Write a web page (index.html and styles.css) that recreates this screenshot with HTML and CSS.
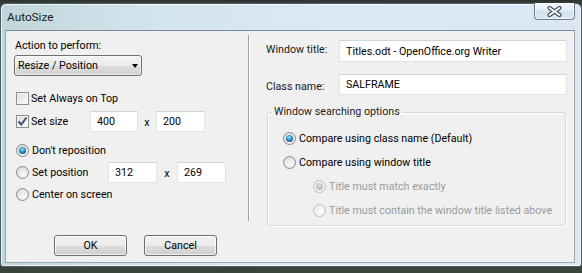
FILE: index.html
```html
<!DOCTYPE html>
<html>
<head>
<meta charset="utf-8">
<title>AutoSize</title>
<link rel="stylesheet" href="styles.css">
</head>
<body>
<div class="window">
  <div class="titlebar">
    <span class="title">AutoSize</span>
    <div class="close">
      <svg width="15" height="11" viewBox="0 0 15 11">
        <path d="M2.5 2 L12.5 9 M12.5 2 L2.5 9" stroke="#3f4854" stroke-width="4" stroke-linecap="round" fill="none"/>
        <path d="M2.5 2 L12.5 9 M12.5 2 L2.5 9" stroke="#ffffff" stroke-width="2" stroke-linecap="round" fill="none"/>
      </svg>
    </div>
  </div>
  <div class="client">
    <div class="main">
      <div class="left">
        <div class="label">Action to perform:</div>
        <div class="select"><span>Resize / Position</span><span class="arrow"></span></div>
        <div class="row row-top"><span class="check"></span><span>Set Always on Top</span></div>
        <div class="row row-size">
          <span class="opt opt-size"><span class="check"><svg width="11" height="11" viewBox="0 0 11 11"><path d="M1.5 5.5 L4.3 8.5 L9.5 1.5" stroke="#3b4f7a" stroke-width="2" fill="none"/></svg></span><span>Set size</span></span>
          <span class="field fw48">400</span><span class="times">x</span><span class="field fw49">200</span>
        </div>
        <div class="radios">
          <div class="row"><span class="radio on"></span><span>Don't reposition</span></div>
          <div class="row">
            <span class="opt opt-pos"><span class="radio"></span><span>Set position</span></span>
            <span class="field fw49">312</span><span class="times times-pos">x</span><span class="field fw49">269</span>
          </div>
          <div class="row"><span class="radio"></span><span>Center on screen</span></div>
        </div>
      </div>
      <div class="sep"></div>
      <div class="right">
        <div class="frow"><span class="flabel">Window title:</span><span class="field fwide">Titles.odt - OpenOffice.org Writer</span></div>
        <div class="frow frow-2"><span class="flabel flabel-2">Class name:</span><span class="field fwide">SALFRAME</span></div>
        <fieldset class="group">
          <legend>Window searching options</legend>
          <div class="group-body">
            <div class="grow"><span class="radio on"></span><span>Compare using class name (Default)</span></div>
            <div class="grow"><span class="radio"></span><span>Compare using window title</span></div>
            <div class="grow sub disabled"><span class="radio on"></span><span>Title must match exactly</span></div>
            <div class="grow sub disabled"><span class="radio"></span><span>Title must contain the window title listed above</span></div>
          </div>
        </fieldset>
      </div>
    </div>
    <div class="buttons">
      <div class="btn">OK</div>
      <div class="btn">Cancel</div>
    </div>
  </div>
</div>
</body>
</html>
```
FILE: styles.css
```css
* { box-sizing: border-box; }
html, body { margin: 0; padding: 0; }
body {
  width: 582px;
  height: 273px;
  overflow: hidden;
  background: linear-gradient(180deg, #2d322f 0px, #3a3f3b 3px, #39443a 100%);
  font-family: Roboto, "Liberation Sans", sans-serif;
  font-size: 10.7px;
  color: #000;
}
.window {
  margin-top: 3px;
  width: 582px;
  height: 264px;
  display: flex;
  flex-direction: column;
  border: 1px solid #4e5c69;
  border-radius: 6px 6px 3px 3px;
  padding: 0 6px 3px 4px;
  background: linear-gradient(90deg, #bfd6da 0%, #d0e3ea 22%, #dce9f5 55%, #dae8f5 100%);
  box-shadow: inset 1px 1px 0 rgba(255,255,255,0.7), inset -1px -1px 0 rgba(255,255,255,0.7);
}
.titlebar {
  height: 26px;
  display: flex;
  align-items: flex-start;
  justify-content: space-between;
}
.title {
  padding: 6px 0 0 2px;
  font-size: 11.8px;
  line-height: 14px;
  color: #1c1c1c;
}
.close {
  margin-top: -1px;
  width: 41px;
  height: 17px;
  border: 1px solid #6d7c8b;
  border-top: none;
  border-radius: 0 0 4px 4px;
  background: linear-gradient(180deg, #f1f6fa 0%, #e3ecf4 50%, #d3e0eb 51%, #dce7f1 100%);
  box-shadow: inset 0 0 0 1px rgba(255,255,255,0.6);
  display: flex;
  align-items: center;
  justify-content: center;
  padding-top: 1px;
}
.close svg { display: block; }
.client {
  flex: 1;
  background: #f0f0f0;
  border: 1px solid #99a6b3;
  border-top-color: #7d8a98;
  display: flex;
  flex-direction: column;
}
.main {
  display: flex;
  align-items: flex-start;
}
.left {
  width: 242px;
  padding: 8px 0 0 9px;
  display: flex;
  flex-direction: column;
  align-items: flex-start;
}
.label { line-height: 14px; }
.select {
  margin: 2px 0 0 -1px;
  width: 128px;
  height: 21px;
  border: 1px solid #707070;
  border-radius: 3px;
  background: linear-gradient(180deg, #f3f3f3 0%, #ebebeb 50%, #dddddd 51%, #d2d2d2 100%);
  box-shadow: inset 0 0 0 1px rgba(255,255,255,0.55);
  display: flex;
  align-items: center;
  padding: 0 3px 0 3px;
}
.arrow {
  margin-left: auto;
  width: 0;
  height: 0;
  border-left: 3.5px solid transparent;
  border-right: 3.5px solid transparent;
  border-top: 4px solid #000;
}
.row {
  display: flex;
  align-items: center;
  margin-left: 1px;
  height: 22px;
}
.row-top { margin-top: 12px; height: 20px; }
.row-size { margin-top: 2px; }
.radios { margin-top: 7px; display: flex; flex-direction: column; }
.opt { display: flex; align-items: center; }
.opt-size { width: 74px; }
.opt-pos { width: 92px; }
.check {
  width: 13px;
  height: 13px;
  margin-right: 2px;
  border: 1px solid #8e8f8f;
  background: linear-gradient(135deg, #dcdcdc 0%, #f0f0f0 60%, #fbfbfb 100%);
  box-shadow: inset 0 0 0 1px #f4f4f4;
  display: flex;
  align-items: center;
  justify-content: center;
}
.check svg { display: block; }
.radio {
  position: relative;
  width: 13px;
  height: 13px;
  margin-right: 3px;
  border-radius: 50%;
  border: 1px solid #8a8a8a;
  background: radial-gradient(circle at 60% 65%, #fafafa 0%, #e6e6e6 55%, #cfcfcf 100%);
  flex: none;
}
.radio.on::after {
  content: "";
  position: absolute;
  left: 2px;
  top: 2px;
  width: 7px;
  height: 7px;
  border-radius: 50%;
  background: radial-gradient(circle at 45% 35%, #9fe0fb 0%, #3ea3d8 35%, #17628f 70%, #0d3b58 100%);
}
.field {
  height: 21px;
  background: #fff;
  border: 1px solid #dfe3e8;
  border-top-color: #cfd4da;
  padding: 0 6px;
  display: flex;
  align-items: center;
  white-space: nowrap;
}
.fw48 { width: 48px; }
.fw49 { width: 49px; }
.times {
  width: 18px;
  text-align: center;
  padding-top: 3px;
}
.times-pos { width: 20px; }
.sep {
  margin-top: 4px;
  width: 2px;
  height: 186px;
  border-left: 1px solid #a0a0a0;
  border-right: 1px solid #ffffff;
  flex: none;
}
.right {
  padding: 9px 0 0 16px;
  display: flex;
  flex-direction: column;
}
.frow { display: flex; align-items: center; }
.frow-2 { margin-top: 12px; }
.flabel { width: 73px; padding-bottom: 3px; color: #1a1a1a; }
.flabel-2 { padding-bottom: 0; padding-top: 4px; }
.fwide { width: 228px; height: 22px; }
.frow-2 .fwide { height: 21px; }
.group {
  margin: 10px 0 0 1px;
  width: 299px;
  padding: 0;
  border: 1px solid #d2d9de;
  border-radius: 3px;
  box-shadow: inset 1px 1px 0 #ffffff, 1px 1px 0 #ffffff;
  min-width: 0;
}
.group legend {
  margin-left: 4px;
  padding: 0 2px;
  line-height: 14px;
  color: #1a1a1a;
}
.group-body {
  padding: 7px 0 3px 15px;
}
.grow {
  height: 24px;
  display: flex;
  align-items: center;
}
.grow.sub { padding-left: 30px; }
.disabled { color: #9a9a9a; }
.disabled .radio {
  border-color: #bdbdbd;
  background: radial-gradient(circle at 60% 65%, #fbfbfb 0%, #f0f0f0 60%, #e2e2e2 100%);
}
.disabled .radio.on::after {
  background: radial-gradient(circle at 45% 35%, #e0e0e0 0%, #bcbcbc 55%, #a4a4a4 100%);
}
.buttons {
  margin-top: 9px;
  padding-left: 48px;
  display: flex;
  gap: 17px;
}
.btn {
  width: 73px;
  height: 21px;
  border: 1px solid #707070;
  border-radius: 3px;
  background: linear-gradient(180deg, #f2f2f2 0%, #ebebeb 50%, #dddddd 51%, #cfcfcf 100%);
  box-shadow: inset 0 0 0 1px rgba(255,255,255,0.7);
  display: flex;
  align-items: center;
  justify-content: center;
  color: #000;
}
```
